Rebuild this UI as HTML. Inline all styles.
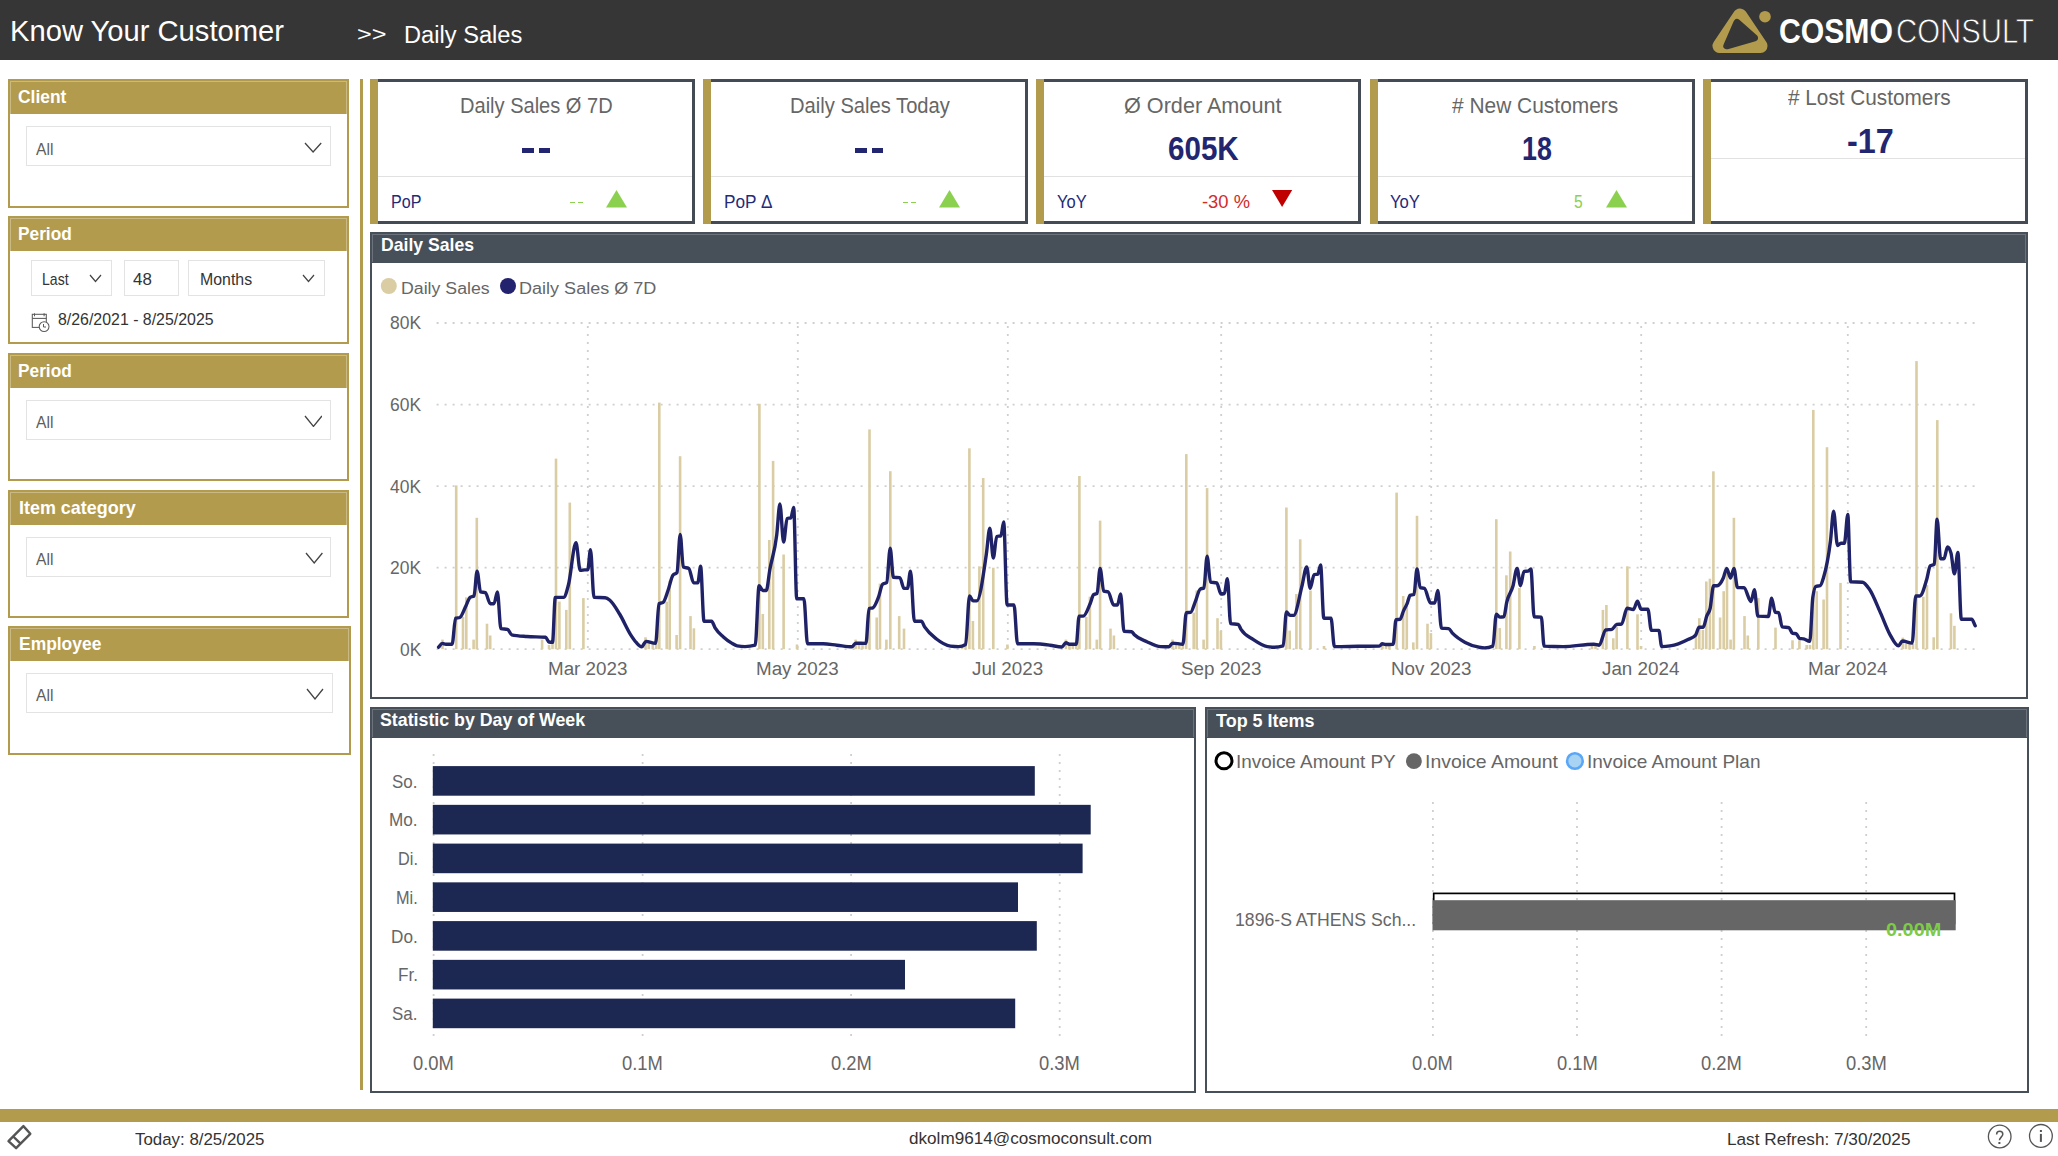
<!DOCTYPE html>
<html><head><meta charset="utf-8"><style>
html,body{margin:0;padding:0;width:2058px;height:1156px;overflow:hidden;background:#fff}
.t{position:absolute;white-space:nowrap;line-height:1;font-family:"Liberation Sans",sans-serif;transform-origin:0 0}
</style></head><body>
<div style="position:absolute;left:0px;top:0px;width:2058px;height:60px;background:#363636"></div>
<div class="t" style="left:10.00px;top:16.33px;font-size:30.09px;color:#fff;transform:scaleX(0.9695);">Know Your Customer</div>
<div class="t" style="left:356.50px;top:24.03px;font-size:20.75px;color:#fff;transform:scaleX(1.2169);">&gt;&gt;</div>
<div class="t" style="left:403.70px;top:22.78px;font-size:24.83px;color:#fff;transform:scaleX(0.9526);">Daily Sales</div>
<svg style="position:absolute;left:1700px;top:0" width="358" height="60" viewBox="1700 0 358 60">
<polygon points="1740,15.5 1719.5,46 1760.5,46" fill="#B39B4D" stroke="#B39B4D" stroke-width="14" stroke-linejoin="round"/>
<polygon points="1737,22.5 1726.8,45.8 1754.5,37.8" fill="#363636" stroke="#363636" stroke-width="7" stroke-linejoin="round"/>
<circle cx="1765" cy="16.7" r="5.8" fill="#B39B4D"/>
</svg>
<div class="t" style="left:1779.00px;top:13.89px;font-size:34.38px;color:#fff;font-weight:bold;transform:scaleX(0.8776);">COSMO</div>
<div class="t" style="left:1896.00px;top:13.89px;font-size:34.38px;color:#fff;transform:scaleX(0.8532);-webkit-text-stroke:0.8px #363636">CONSULT</div>
<div style="position:absolute;left:8px;top:79px;width:341px;height:129px;border:2px solid #B39B4D;box-sizing:border-box;background:#fff"></div>
<div style="position:absolute;left:8px;top:79px;width:341px;height:35px;background:#B39B4D"></div>
<div style="position:absolute;left:10px;top:81px;width:337px;height:1px;background:#C9B985"></div>
<div style="position:absolute;left:10px;top:81px;width:1px;height:33px;background:#C9B985"></div>
<div style="position:absolute;left:346px;top:81px;width:1px;height:33px;background:#C9B985"></div>
<div class="t" style="left:18.20px;top:89.07px;font-size:17.52px;color:#fff;font-weight:bold;transform:scaleX(0.9946);">Client</div>
<div style="position:absolute;left:26px;top:126px;width:305px;height:40px;border:1px solid #E3E3E3;box-sizing:border-box;background:#fff"></div>
<div class="t" style="left:36.00px;top:141.56px;font-size:16.83px;color:#605E5C;transform:scaleX(0.9307);">All</div>
<svg style="position:absolute;left:304.4px;top:142.3px" width="18.200000000000045" height="11.0"><polyline points="1,1 9.100000000000023,10.0 17.200000000000045,1" fill="none" stroke="#444" stroke-width="1.3"/></svg>
<div style="position:absolute;left:8px;top:216px;width:341px;height:128px;border:2px solid #B39B4D;box-sizing:border-box;background:#fff"></div>
<div style="position:absolute;left:8px;top:216px;width:341px;height:35px;background:#B39B4D"></div>
<div style="position:absolute;left:10px;top:218px;width:337px;height:1px;background:#C9B985"></div>
<div style="position:absolute;left:10px;top:218px;width:1px;height:33px;background:#C9B985"></div>
<div style="position:absolute;left:346px;top:218px;width:1px;height:33px;background:#C9B985"></div>
<div class="t" style="left:18.20px;top:226.07px;font-size:17.52px;color:#fff;font-weight:bold;transform:scaleX(0.9869);">Period</div>
<div style="position:absolute;left:31px;top:260px;width:81px;height:36px;border:1px solid #E3E3E3;box-sizing:border-box"></div>
<div class="t" style="left:42.40px;top:270.70px;font-size:17.01px;color:#333;transform:scaleX(0.8276);">Last</div>
<svg style="position:absolute;left:89px;top:274px" width="14" height="10"><polyline points="1,1 6.5,7.5 12,1" fill="none" stroke="#444" stroke-width="1.2"/></svg>
<div style="position:absolute;left:124px;top:260px;width:55px;height:36px;border:1px solid #E3E3E3;box-sizing:border-box"></div>
<div class="t" style="left:133.00px;top:271.73px;font-size:16.62px;color:#333;transform:scaleX(1.0173);">48</div>
<div style="position:absolute;left:188px;top:260px;width:137px;height:36px;border:1px solid #E3E3E3;box-sizing:border-box"></div>
<div class="t" style="left:199.70px;top:271.44px;font-size:16.14px;color:#333;transform:scaleX(0.9846);">Months</div>
<svg style="position:absolute;left:302px;top:274px" width="14" height="10"><polyline points="1,1 6.5,7.5 12,1" fill="none" stroke="#444" stroke-width="1.2"/></svg>
<svg style="position:absolute;left:30px;top:311px" width="22" height="23" viewBox="0 0 22 23">
<rect x="2.3" y="3.3" width="14" height="13.1" fill="none" stroke="#5A5A5A" stroke-width="1.05"/>
<line x1="2.3" y1="7.4" x2="16.3" y2="7.4" stroke="#5A5A5A" stroke-width="1.05"/>
<line x1="4.5" y1="2.3" x2="4.5" y2="5.3" stroke="#5A5A5A" stroke-width="1.05"/>
<line x1="14.1" y1="2.3" x2="14.1" y2="5.3" stroke="#5A5A5A" stroke-width="1.05"/>
<circle cx="14.1" cy="15.6" r="4.9" fill="#fff" stroke="#5A5A5A" stroke-width="1.05"/>
<polyline points="13.5,13 13.5,16 16,16" fill="none" stroke="#5A5A5A" stroke-width="1"/>
</svg>
<div class="t" style="left:58.00px;top:312.17px;font-size:15.86px;color:#333;transform:scaleX(1.0024);">8/26/2021 - 8/25/2025</div>
<div style="position:absolute;left:8px;top:353px;width:341px;height:128px;border:2px solid #B39B4D;box-sizing:border-box;background:#fff"></div>
<div style="position:absolute;left:8px;top:353px;width:341px;height:35px;background:#B39B4D"></div>
<div style="position:absolute;left:10px;top:355px;width:337px;height:1px;background:#C9B985"></div>
<div style="position:absolute;left:10px;top:355px;width:1px;height:33px;background:#C9B985"></div>
<div style="position:absolute;left:346px;top:355px;width:1px;height:33px;background:#C9B985"></div>
<div class="t" style="left:18.20px;top:363.07px;font-size:17.52px;color:#fff;font-weight:bold;transform:scaleX(0.9869);">Period</div>
<div style="position:absolute;left:26px;top:400px;width:305px;height:40px;border:1px solid #E3E3E3;box-sizing:border-box;background:#fff"></div>
<div class="t" style="left:35.80px;top:415.47px;font-size:16.69px;color:#605E5C;transform:scaleX(0.9384);">All</div>
<svg style="position:absolute;left:303.6px;top:415px" width="18.899999999999977" height="12.399999999999977"><polyline points="1,1 9.449999999999989,11.399999999999977 17.899999999999977,1" fill="none" stroke="#444" stroke-width="1.3"/></svg>
<div style="position:absolute;left:8px;top:490px;width:341px;height:128px;border:2px solid #B39B4D;box-sizing:border-box;background:#fff"></div>
<div style="position:absolute;left:8px;top:490px;width:341px;height:35px;background:#B39B4D"></div>
<div style="position:absolute;left:10px;top:492px;width:337px;height:1px;background:#C9B985"></div>
<div style="position:absolute;left:10px;top:492px;width:1px;height:33px;background:#C9B985"></div>
<div style="position:absolute;left:346px;top:492px;width:1px;height:33px;background:#C9B985"></div>
<div class="t" style="left:18.90px;top:498.38px;font-size:19.04px;color:#fff;font-weight:bold;transform:scaleX(0.9426);">Item category</div>
<div style="position:absolute;left:26px;top:537px;width:305px;height:40px;border:1px solid #E3E3E3;box-sizing:border-box;background:#fff"></div>
<div class="t" style="left:35.80px;top:552.47px;font-size:16.69px;color:#605E5C;transform:scaleX(0.9384);">All</div>
<svg style="position:absolute;left:304.6px;top:552px" width="18.399999999999977" height="12"><polyline points="1,1 9.199999999999989,11 17.399999999999977,1" fill="none" stroke="#444" stroke-width="1.3"/></svg>
<div style="position:absolute;left:8px;top:626px;width:343px;height:129px;border:2px solid #B39B4D;box-sizing:border-box;background:#fff"></div>
<div style="position:absolute;left:8px;top:626px;width:343px;height:35px;background:#B39B4D"></div>
<div style="position:absolute;left:10px;top:628px;width:339px;height:1px;background:#C9B985"></div>
<div style="position:absolute;left:10px;top:628px;width:1px;height:33px;background:#C9B985"></div>
<div style="position:absolute;left:348px;top:628px;width:1px;height:33px;background:#C9B985"></div>
<div class="t" style="left:18.90px;top:634.38px;font-size:19.04px;color:#fff;font-weight:bold;transform:scaleX(0.9161);">Employee</div>
<div style="position:absolute;left:26px;top:673px;width:307px;height:40px;border:1px solid #E3E3E3;box-sizing:border-box;background:#fff"></div>
<div class="t" style="left:35.80px;top:688.47px;font-size:16.69px;color:#605E5C;transform:scaleX(0.9384);">All</div>
<svg style="position:absolute;left:306px;top:688px" width="18" height="12"><polyline points="1,1 9.0,11 17,1" fill="none" stroke="#444" stroke-width="1.3"/></svg>
<div style="position:absolute;left:360px;top:79px;width:3px;height:1011px;background:#B39B4D"></div>
<div style="position:absolute;left:370px;top:79px;width:325px;height:145px;border:3px solid #444B55;border-left:none;box-sizing:border-box;background:#fff"></div>
<div style="position:absolute;left:370px;top:79px;width:8px;height:145px;background:#B39B4D"></div>
<div style="position:absolute;left:378px;top:176px;width:314px;height:1px;background:#E1E1E1"></div>
<div class="t" style="left:459.70px;top:95.82px;font-size:21.24px;color:#666;transform:scaleX(0.9442);">Daily Sales Ø 7D</div>
<div style="position:absolute;left:522.4px;top:148px;width:12px;height:5px;background:#22256F"></div>
<div style="position:absolute;left:538.9px;top:148px;width:11px;height:5px;background:#22256F"></div>
<div class="t" style="left:390.50px;top:192.87px;font-size:18.46px;color:#252A78;transform:scaleX(0.8714);">PoP</div>
<div style="position:absolute;left:569.8px;top:202px;width:5px;height:1.3px;background:#8CD050"></div>
<div style="position:absolute;left:577.8px;top:202px;width:5px;height:1.3px;background:#8CD050"></div>
<svg style="position:absolute;left:605.8px;top:190.3px" width="21" height="17.4"><polygon points="10.5,0 21,17.4 0,17.4" fill="#8CD050"/></svg>
<div style="position:absolute;left:703px;top:79px;width:325px;height:145px;border:3px solid #444B55;border-left:none;box-sizing:border-box;background:#fff"></div>
<div style="position:absolute;left:703px;top:79px;width:8px;height:145px;background:#B39B4D"></div>
<div style="position:absolute;left:711px;top:176px;width:314px;height:1px;background:#E1E1E1"></div>
<div class="t" style="left:789.50px;top:95.82px;font-size:21.24px;color:#666;transform:scaleX(0.9493);">Daily Sales Today</div>
<div style="position:absolute;left:855.4px;top:148px;width:12px;height:5px;background:#22256F"></div>
<div style="position:absolute;left:871.9px;top:148px;width:11px;height:5px;background:#22256F"></div>
<div class="t" style="left:723.50px;top:192.87px;font-size:18.46px;color:#252A78;transform:scaleX(0.9324);">PoP Δ</div>
<div style="position:absolute;left:902.8px;top:202px;width:5px;height:1.3px;background:#8CD050"></div>
<div style="position:absolute;left:910.8px;top:202px;width:5px;height:1.3px;background:#8CD050"></div>
<svg style="position:absolute;left:938.8px;top:190.3px" width="21" height="17.4"><polygon points="10.5,0 21,17.4 0,17.4" fill="#8CD050"/></svg>
<div style="position:absolute;left:1036px;top:79px;width:325px;height:145px;border:3px solid #444B55;border-left:none;box-sizing:border-box;background:#fff"></div>
<div style="position:absolute;left:1036px;top:79px;width:8px;height:145px;background:#B39B4D"></div>
<div style="position:absolute;left:1044px;top:176px;width:314px;height:1px;background:#E1E1E1"></div>
<div class="t" style="left:1123.60px;top:95.82px;font-size:21.24px;color:#666;transform:scaleX(1.0184);">Ø Order Amount</div>
<div class="t" style="left:1167.90px;top:132.53px;font-size:32.81px;color:#22256F;font-weight:bold;transform:scaleX(0.9013);">605K</div>
<div class="t" style="left:1056.50px;top:192.87px;font-size:18.46px;color:#252A78;transform:scaleX(0.8949);">YoY</div>
<div class="t" style="left:1202.00px;top:193.10px;font-size:18.19px;color:#D22B2B;transform:scaleX(1.0100);">-30 %</div>
<svg style="position:absolute;left:1272.4px;top:190.3px" width="20.2" height="17"><polygon points="0,0 20.2,0 10.1,17" fill="#C00000"/></svg>
<div style="position:absolute;left:1370px;top:79px;width:325px;height:145px;border:3px solid #444B55;border-left:none;box-sizing:border-box;background:#fff"></div>
<div style="position:absolute;left:1370px;top:79px;width:8px;height:145px;background:#B39B4D"></div>
<div style="position:absolute;left:1378px;top:176px;width:314px;height:1px;background:#E1E1E1"></div>
<div class="t" style="left:1452.40px;top:95.12px;font-size:22.06px;color:#666;transform:scaleX(0.9490);"># New Customers</div>
<div class="t" style="left:1521.90px;top:132.53px;font-size:32.81px;color:#22256F;font-weight:bold;transform:scaleX(0.8168);">18</div>
<div class="t" style="left:1389.50px;top:192.87px;font-size:18.46px;color:#252A78;transform:scaleX(0.9039);">YoY</div>
<div class="t" style="left:1574.30px;top:192.87px;font-size:18.46px;color:#8CD050;transform:scaleX(0.8477);">5</div>
<svg style="position:absolute;left:1605.8px;top:190.3px" width="21" height="17.4"><polygon points="10.5,0 21,17.4 0,17.4" fill="#8CD050"/></svg>
<div style="position:absolute;left:1703px;top:79px;width:325px;height:145px;border:3px solid #444B55;border-left:none;box-sizing:border-box;background:#fff"></div>
<div style="position:absolute;left:1703px;top:79px;width:8px;height:145px;background:#B39B4D"></div>
<div style="position:absolute;left:1711px;top:158px;width:314px;height:1px;background:#E1E1E1"></div>
<div class="t" style="left:1787.50px;top:87.63px;font-size:21.35px;color:#666;transform:scaleX(0.9727);"># Lost Customers</div>
<div class="t" style="left:1846.50px;top:123.32px;font-size:35.17px;color:#22256F;font-weight:bold;transform:scaleX(0.9208);">-17</div>
<div style="position:absolute;left:370px;top:232px;width:1658px;height:467px;border:2px solid #474F59;box-sizing:border-box;background:#fff"></div>
<div style="position:absolute;left:370px;top:232px;width:1658px;height:31px;background:#474F59"></div>
<div style="position:absolute;left:372px;top:234px;width:1654px;height:1px;background:#6B727B"></div>
<div style="position:absolute;left:372px;top:234px;width:1px;height:28px;background:#6B727B"></div>
<div style="position:absolute;left:2025px;top:234px;width:1px;height:28px;background:#6B727B"></div>
<div class="t" style="left:380.60px;top:236.62px;font-size:17.93px;color:#fff;font-weight:bold;transform:scaleX(0.9832);">Daily Sales</div>
<div style="position:absolute;left:370px;top:707px;width:826px;height:386px;border:2px solid #474F59;box-sizing:border-box;background:#fff"></div>
<div style="position:absolute;left:370px;top:707px;width:826px;height:31px;background:#474F59"></div>
<div style="position:absolute;left:372px;top:709px;width:822px;height:1px;background:#6B727B"></div>
<div style="position:absolute;left:372px;top:709px;width:1px;height:28px;background:#6B727B"></div>
<div style="position:absolute;left:1193px;top:709px;width:1px;height:28px;background:#6B727B"></div>
<div class="t" style="left:380.20px;top:710.99px;font-size:18.91px;color:#fff;font-weight:bold;transform:scaleX(0.9400);">Statistic by Day of Week</div>
<div style="position:absolute;left:1205px;top:707px;width:824px;height:386px;border:2px solid #474F59;box-sizing:border-box;background:#fff"></div>
<div style="position:absolute;left:1205px;top:707px;width:824px;height:31px;background:#474F59"></div>
<div style="position:absolute;left:1207px;top:709px;width:820px;height:1px;background:#6B727B"></div>
<div style="position:absolute;left:1207px;top:709px;width:1px;height:28px;background:#6B727B"></div>
<div style="position:absolute;left:2026px;top:709px;width:1px;height:28px;background:#6B727B"></div>
<div class="t" style="left:1215.70px;top:710.58px;font-size:19.04px;color:#fff;font-weight:bold;transform:scaleX(0.9446);">Top 5 Items</div>
<svg style="position:absolute;left:0;top:0" width="2058" height="1156" viewBox="0 0 2058 1156">
<line x1="433.6" y1="754" x2="433.6" y2="1038" stroke="#CFCFCF" stroke-width="1.8" stroke-dasharray="2 6"/>
<line x1="642.6" y1="754" x2="642.6" y2="1038" stroke="#CFCFCF" stroke-width="1.8" stroke-dasharray="2 6"/>
<line x1="851.1" y1="754" x2="851.1" y2="1038" stroke="#CFCFCF" stroke-width="1.8" stroke-dasharray="2 6"/>
<line x1="1059.7" y1="754" x2="1059.7" y2="1038" stroke="#CFCFCF" stroke-width="1.8" stroke-dasharray="2 6"/>
<rect x="432.8" y="766.10" width="602.00" height="29.6" fill="#1C2752"/>
<rect x="432.8" y="804.85" width="657.90" height="29.6" fill="#1C2752"/>
<rect x="432.8" y="843.60" width="649.80" height="29.6" fill="#1C2752"/>
<rect x="432.8" y="882.35" width="585.20" height="29.6" fill="#1C2752"/>
<rect x="432.8" y="921.10" width="604.00" height="29.6" fill="#1C2752"/>
<rect x="432.8" y="959.85" width="472.20" height="29.6" fill="#1C2752"/>
<rect x="432.8" y="998.60" width="582.40" height="29.6" fill="#1C2752"/>
<line x1="1432.9" y1="802" x2="1432.9" y2="1036" stroke="#CFCFCF" stroke-width="1.8" stroke-dasharray="2 6"/>
<line x1="1577" y1="802" x2="1577" y2="1036" stroke="#CFCFCF" stroke-width="1.8" stroke-dasharray="2 6"/>
<line x1="1721.6" y1="802" x2="1721.6" y2="1036" stroke="#CFCFCF" stroke-width="1.8" stroke-dasharray="2 6"/>
<line x1="1866.2" y1="802" x2="1866.2" y2="1036" stroke="#CFCFCF" stroke-width="1.8" stroke-dasharray="2 6"/>
<rect x="1433.7" y="893.4" width="520.8" height="30" fill="none" stroke="#000" stroke-width="1.7"/>
<rect x="1432.5" y="900.2" width="523.2" height="30.1" fill="#666666"/>
<circle cx="1224" cy="760.8" r="8" fill="#fff" stroke="#000" stroke-width="3"/>
<circle cx="1413.9" cy="761.1" r="7.9" fill="#666666"/>
<circle cx="1574.9" cy="761" r="7.8" fill="#A9D3F2" stroke="#5BA7F7" stroke-width="2.6"/>
<path d="M23.4,1126.1 L30.3,1133.8 L16.1,1148.2 L8.5,1141.2 Z" fill="none" stroke="#555" stroke-width="2.4" stroke-linejoin="round"/>
<line x1="13.2" y1="1136.5" x2="20.6" y2="1143.7" stroke="#555" stroke-width="2.4"/>
<circle cx="1999.7" cy="1136.5" r="11.3" fill="none" stroke="#555" stroke-width="1.3"/>
<circle cx="2040.9" cy="1135.9" r="11.4" fill="none" stroke="#555" stroke-width="1.3"/>
<path d="M1996.6,1134.4 C1996.6,1132 1998,1131.3 1999.7,1131.3 C2001.6,1131.3 2002.8,1132.5 2002.8,1134.2 C2002.8,1136.5 1999.6,1137.7 1999.4,1140.2" fill="none" stroke="#555" stroke-width="1.5"/>
<rect x="1998.4" y="1142" width="2" height="2" fill="#555"/>
<rect x="2039.9" y="1130" width="2" height="2" fill="#555"/>
<rect x="2039.9" y="1133.9" width="2" height="8" fill="#555"/>
</svg>
<div class="t" style="left:392.20px;top:772.90px;font-size:18.19px;color:#666;transform:scaleX(0.9300);">So.</div>
<div class="t" style="left:388.98px;top:811.42px;font-size:18.46px;color:#666;transform:scaleX(0.9300);">Mo.</div>
<div class="t" style="left:397.69px;top:850.97px;font-size:17.52px;color:#666;transform:scaleX(0.9300);">Di.</div>
<div class="t" style="left:395.88px;top:889.72px;font-size:17.52px;color:#666;transform:scaleX(0.9300);">Mi.</div>
<div class="t" style="left:390.89px;top:927.67px;font-size:18.46px;color:#666;transform:scaleX(0.9300);">Do.</div>
<div class="t" style="left:397.57px;top:966.42px;font-size:18.46px;color:#666;transform:scaleX(0.9300);">Fr.</div>
<div class="t" style="left:392.20px;top:1005.40px;font-size:18.19px;color:#666;transform:scaleX(0.9300);">Sa.</div>
<div class="t" style="left:413.18px;top:1053.83px;font-size:19.34px;color:#666;transform:scaleX(0.9500);">0.0M</div>
<div class="t" style="left:622.18px;top:1053.83px;font-size:19.34px;color:#666;transform:scaleX(0.9500);">0.1M</div>
<div class="t" style="left:830.68px;top:1053.83px;font-size:19.34px;color:#666;transform:scaleX(0.9500);">0.2M</div>
<div class="t" style="left:1039.28px;top:1053.83px;font-size:19.34px;color:#666;transform:scaleX(0.9500);">0.3M</div>
<div class="t" style="left:1412.48px;top:1053.83px;font-size:19.34px;color:#666;transform:scaleX(0.9500);">0.0M</div>
<div class="t" style="left:1556.58px;top:1053.83px;font-size:19.34px;color:#666;transform:scaleX(0.9500);">0.1M</div>
<div class="t" style="left:1701.18px;top:1053.83px;font-size:19.34px;color:#666;transform:scaleX(0.9500);">0.2M</div>
<div class="t" style="left:1845.78px;top:1053.83px;font-size:19.34px;color:#666;transform:scaleX(0.9500);">0.3M</div>
<div class="t" style="left:1236.00px;top:753.64px;font-size:17.79px;color:#666;transform:scaleX(1.0623);">Invoice Amount PY</div>
<div class="t" style="left:1424.90px;top:753.64px;font-size:17.79px;color:#666;transform:scaleX(1.0933);">Invoice Amount</div>
<div class="t" style="left:1587.40px;top:753.64px;font-size:17.79px;color:#666;transform:scaleX(1.0702);">Invoice Amount Plan</div>
<div class="t" style="left:1235.20px;top:910.85px;font-size:18.60px;color:#666;transform:scaleX(0.9494);">1896-S ATHENS Sch...</div>
<div class="t" style="left:1885.90px;top:921.18px;font-size:18.34px;color:#7DCB48;font-weight:bold;transform:scaleX(1.0851);">0.00M</div>
<div style="position:absolute;left:0px;top:1109px;width:2058px;height:13px;background:#B39B4D"></div>
<div class="t" style="left:135.00px;top:1131.39px;font-size:17.38px;color:#333;transform:scaleX(0.9719);">Today: 8/25/2025</div>
<div class="t" style="left:909.00px;top:1130.76px;font-size:16.83px;color:#333;transform:scaleX(1.0174);">dkolm9614@cosmoconsult.com</div>
<div class="t" style="left:1727.00px;top:1131.39px;font-size:17.38px;color:#333;transform:scaleX(0.9903);">Last Refresh: 7/30/2025</div>
<svg style="position:absolute;left:0;top:0" width="2058" height="1156" viewBox="0 0 2058 1156">
<line x1="436.6" y1="649.20" x2="1977" y2="649.20" stroke="#CFCFCF" stroke-width="1.8" stroke-dasharray="2 6"/>
<line x1="436.6" y1="567.65" x2="1977" y2="567.65" stroke="#CFCFCF" stroke-width="1.8" stroke-dasharray="2 6"/>
<line x1="436.6" y1="486.10" x2="1977" y2="486.10" stroke="#CFCFCF" stroke-width="1.8" stroke-dasharray="2 6"/>
<line x1="436.6" y1="404.55" x2="1977" y2="404.55" stroke="#CFCFCF" stroke-width="1.8" stroke-dasharray="2 6"/>
<line x1="436.6" y1="323.00" x2="1977" y2="323.00" stroke="#CFCFCF" stroke-width="1.8" stroke-dasharray="2 6"/>
<line x1="587.8" y1="326" x2="587.8" y2="650" stroke="#CFCFCF" stroke-width="1.8" stroke-dasharray="2 6"/>
<line x1="797.8" y1="326" x2="797.8" y2="650" stroke="#CFCFCF" stroke-width="1.8" stroke-dasharray="2 6"/>
<line x1="1007.8" y1="326" x2="1007.8" y2="650" stroke="#CFCFCF" stroke-width="1.8" stroke-dasharray="2 6"/>
<line x1="1221.2" y1="326" x2="1221.2" y2="650" stroke="#CFCFCF" stroke-width="1.8" stroke-dasharray="2 6"/>
<line x1="1431.2" y1="326" x2="1431.2" y2="650" stroke="#CFCFCF" stroke-width="1.8" stroke-dasharray="2 6"/>
<line x1="1641.2" y1="326" x2="1641.2" y2="650" stroke="#CFCFCF" stroke-width="1.8" stroke-dasharray="2 6"/>
<line x1="1847.8" y1="326" x2="1847.8" y2="650" stroke="#CFCFCF" stroke-width="1.8" stroke-dasharray="2 6"/>
<rect x="441.20" y="639.60" width="2.6" height="9.60" fill="#DACCA3"/>
<rect x="454.90" y="485.40" width="2.6" height="163.80" fill="#DACCA3"/>
<rect x="461.70" y="616.80" width="2.6" height="32.40" fill="#DACCA3"/>
<rect x="465.00" y="597.40" width="2.6" height="51.80" fill="#DACCA3"/>
<rect x="472.30" y="639.60" width="2.6" height="9.60" fill="#DACCA3"/>
<rect x="475.50" y="517.80" width="2.6" height="131.40" fill="#DACCA3"/>
<rect x="485.70" y="623.70" width="2.6" height="25.50" fill="#DACCA3"/>
<rect x="488.90" y="635.50" width="2.6" height="13.70" fill="#DACCA3"/>
<rect x="540.80" y="639.60" width="2.6" height="9.60" fill="#DACCA3"/>
<rect x="547.70" y="645.00" width="2.6" height="4.20" fill="#DACCA3"/>
<rect x="551.20" y="642.00" width="2.6" height="7.20" fill="#DACCA3"/>
<rect x="554.70" y="458.60" width="2.6" height="190.60" fill="#DACCA3"/>
<rect x="558.10" y="601.60" width="2.6" height="47.60" fill="#DACCA3"/>
<rect x="565.00" y="609.90" width="2.6" height="39.30" fill="#DACCA3"/>
<rect x="568.50" y="502.60" width="2.6" height="146.60" fill="#DACCA3"/>
<rect x="582.10" y="598.10" width="2.6" height="51.10" fill="#DACCA3"/>
<rect x="644.20" y="637.30" width="2.6" height="11.90" fill="#DACCA3"/>
<rect x="647.40" y="643.00" width="2.6" height="6.20" fill="#DACCA3"/>
<rect x="651.50" y="643.50" width="2.6" height="5.70" fill="#DACCA3"/>
<rect x="655.00" y="643.50" width="2.6" height="5.70" fill="#DACCA3"/>
<rect x="658.00" y="402.60" width="2.6" height="246.60" fill="#DACCA3"/>
<rect x="665.40" y="601.60" width="2.6" height="47.60" fill="#DACCA3"/>
<rect x="668.40" y="580.80" width="2.6" height="68.40" fill="#DACCA3"/>
<rect x="675.30" y="635.00" width="2.6" height="14.20" fill="#DACCA3"/>
<rect x="678.80" y="456.20" width="2.6" height="193.00" fill="#DACCA3"/>
<rect x="689.20" y="616.10" width="2.6" height="33.10" fill="#DACCA3"/>
<rect x="692.60" y="628.30" width="2.6" height="20.90" fill="#DACCA3"/>
<rect x="758.10" y="403.80" width="2.6" height="245.40" fill="#DACCA3"/>
<rect x="761.50" y="614.00" width="2.6" height="35.20" fill="#DACCA3"/>
<rect x="768.00" y="540.00" width="2.6" height="109.20" fill="#DACCA3"/>
<rect x="771.80" y="460.90" width="2.6" height="188.30" fill="#DACCA3"/>
<rect x="782.30" y="554.50" width="2.6" height="94.70" fill="#DACCA3"/>
<rect x="795.70" y="644.50" width="2.6" height="4.70" fill="#DACCA3"/>
<rect x="854.30" y="639.60" width="2.6" height="9.60" fill="#DACCA3"/>
<rect x="857.70" y="644.00" width="2.6" height="5.20" fill="#DACCA3"/>
<rect x="861.20" y="644.00" width="2.6" height="5.20" fill="#DACCA3"/>
<rect x="864.70" y="644.00" width="2.6" height="5.20" fill="#DACCA3"/>
<rect x="868.20" y="429.40" width="2.6" height="219.80" fill="#DACCA3"/>
<rect x="875.40" y="617.50" width="2.6" height="31.70" fill="#DACCA3"/>
<rect x="878.70" y="583.60" width="2.6" height="65.60" fill="#DACCA3"/>
<rect x="885.10" y="639.60" width="2.6" height="9.60" fill="#DACCA3"/>
<rect x="889.00" y="471.20" width="2.6" height="178.00" fill="#DACCA3"/>
<rect x="897.90" y="616.10" width="2.6" height="33.10" fill="#DACCA3"/>
<rect x="902.70" y="628.60" width="2.6" height="20.60" fill="#DACCA3"/>
<rect x="960.70" y="645.00" width="2.6" height="4.20" fill="#DACCA3"/>
<rect x="964.20" y="645.00" width="2.6" height="4.20" fill="#DACCA3"/>
<rect x="968.10" y="448.30" width="2.6" height="200.90" fill="#DACCA3"/>
<rect x="971.60" y="621.00" width="2.6" height="28.20" fill="#DACCA3"/>
<rect x="978.10" y="566.30" width="2.6" height="82.90" fill="#DACCA3"/>
<rect x="981.90" y="478.00" width="2.6" height="171.20" fill="#DACCA3"/>
<rect x="992.00" y="567.70" width="2.6" height="81.50" fill="#DACCA3"/>
<rect x="1006.10" y="644.50" width="2.6" height="4.70" fill="#DACCA3"/>
<rect x="1064.60" y="639.60" width="2.6" height="9.60" fill="#DACCA3"/>
<rect x="1068.10" y="645.00" width="2.6" height="4.20" fill="#DACCA3"/>
<rect x="1071.50" y="645.00" width="2.6" height="4.20" fill="#DACCA3"/>
<rect x="1075.00" y="645.00" width="2.6" height="4.20" fill="#DACCA3"/>
<rect x="1078.10" y="476.00" width="2.6" height="173.20" fill="#DACCA3"/>
<rect x="1085.00" y="616.80" width="2.6" height="32.40" fill="#DACCA3"/>
<rect x="1088.60" y="596.70" width="2.6" height="52.50" fill="#DACCA3"/>
<rect x="1095.50" y="639.60" width="2.6" height="9.60" fill="#DACCA3"/>
<rect x="1098.80" y="520.60" width="2.6" height="128.60" fill="#DACCA3"/>
<rect x="1109.20" y="628.60" width="2.6" height="20.60" fill="#DACCA3"/>
<rect x="1112.60" y="635.50" width="2.6" height="13.70" fill="#DACCA3"/>
<rect x="1171.20" y="639.60" width="2.6" height="9.60" fill="#DACCA3"/>
<rect x="1174.70" y="645.00" width="2.6" height="4.20" fill="#DACCA3"/>
<rect x="1178.10" y="645.00" width="2.6" height="4.20" fill="#DACCA3"/>
<rect x="1181.60" y="645.00" width="2.6" height="4.20" fill="#DACCA3"/>
<rect x="1185.00" y="454.10" width="2.6" height="195.10" fill="#DACCA3"/>
<rect x="1192.40" y="612.60" width="2.6" height="36.60" fill="#DACCA3"/>
<rect x="1195.40" y="590.50" width="2.6" height="58.70" fill="#DACCA3"/>
<rect x="1202.30" y="639.60" width="2.6" height="9.60" fill="#DACCA3"/>
<rect x="1205.80" y="488.10" width="2.6" height="161.10" fill="#DACCA3"/>
<rect x="1216.20" y="618.20" width="2.6" height="31.00" fill="#DACCA3"/>
<rect x="1219.60" y="630.60" width="2.6" height="18.60" fill="#DACCA3"/>
<rect x="1285.10" y="507.50" width="2.6" height="141.70" fill="#DACCA3"/>
<rect x="1288.40" y="630.60" width="2.6" height="18.60" fill="#DACCA3"/>
<rect x="1295.10" y="594.00" width="2.6" height="55.20" fill="#DACCA3"/>
<rect x="1298.90" y="539.30" width="2.6" height="109.90" fill="#DACCA3"/>
<rect x="1309.20" y="590.50" width="2.6" height="58.70" fill="#DACCA3"/>
<rect x="1322.70" y="646.00" width="2.6" height="3.20" fill="#DACCA3"/>
<rect x="1381.10" y="642.40" width="2.6" height="6.80" fill="#DACCA3"/>
<rect x="1384.70" y="645.00" width="2.6" height="4.20" fill="#DACCA3"/>
<rect x="1388.10" y="645.00" width="2.6" height="4.20" fill="#DACCA3"/>
<rect x="1395.30" y="492.60" width="2.6" height="156.60" fill="#DACCA3"/>
<rect x="1401.90" y="596.00" width="2.6" height="53.20" fill="#DACCA3"/>
<rect x="1405.50" y="605.70" width="2.6" height="43.50" fill="#DACCA3"/>
<rect x="1412.00" y="642.40" width="2.6" height="6.80" fill="#DACCA3"/>
<rect x="1415.70" y="515.80" width="2.6" height="133.40" fill="#DACCA3"/>
<rect x="1426.20" y="623.70" width="2.6" height="25.50" fill="#DACCA3"/>
<rect x="1429.60" y="633.10" width="2.6" height="16.10" fill="#DACCA3"/>
<rect x="1495.00" y="519.20" width="2.6" height="130.00" fill="#DACCA3"/>
<rect x="1498.50" y="628.10" width="2.6" height="21.10" fill="#DACCA3"/>
<rect x="1505.10" y="575.30" width="2.6" height="73.90" fill="#DACCA3"/>
<rect x="1508.90" y="551.50" width="2.6" height="97.70" fill="#DACCA3"/>
<rect x="1518.10" y="588.00" width="2.6" height="61.20" fill="#DACCA3"/>
<rect x="1533.10" y="646.00" width="2.6" height="3.20" fill="#DACCA3"/>
<rect x="1590.70" y="646.00" width="2.6" height="3.20" fill="#DACCA3"/>
<rect x="1594.20" y="646.00" width="2.6" height="3.20" fill="#DACCA3"/>
<rect x="1601.60" y="609.90" width="2.6" height="39.30" fill="#DACCA3"/>
<rect x="1605.10" y="605.00" width="2.6" height="44.20" fill="#DACCA3"/>
<rect x="1612.00" y="638.30" width="2.6" height="10.90" fill="#DACCA3"/>
<rect x="1615.40" y="626.50" width="2.6" height="22.70" fill="#DACCA3"/>
<rect x="1626.10" y="566.30" width="2.6" height="82.90" fill="#DACCA3"/>
<rect x="1636.20" y="614.30" width="2.6" height="34.90" fill="#DACCA3"/>
<rect x="1639.70" y="646.00" width="2.6" height="3.20" fill="#DACCA3"/>
<rect x="1694.70" y="635.00" width="2.6" height="14.20" fill="#DACCA3"/>
<rect x="1698.00" y="618.20" width="2.6" height="31.00" fill="#DACCA3"/>
<rect x="1701.60" y="630.00" width="2.6" height="19.20" fill="#DACCA3"/>
<rect x="1705.00" y="581.50" width="2.6" height="67.70" fill="#DACCA3"/>
<rect x="1708.60" y="578.70" width="2.6" height="70.50" fill="#DACCA3"/>
<rect x="1712.10" y="471.30" width="2.6" height="177.90" fill="#DACCA3"/>
<rect x="1718.80" y="617.50" width="2.6" height="31.70" fill="#DACCA3"/>
<rect x="1722.40" y="591.20" width="2.6" height="58.00" fill="#DACCA3"/>
<rect x="1725.70" y="572.50" width="2.6" height="76.70" fill="#DACCA3"/>
<rect x="1729.30" y="639.60" width="2.6" height="9.60" fill="#DACCA3"/>
<rect x="1732.60" y="517.80" width="2.6" height="131.40" fill="#DACCA3"/>
<rect x="1743.20" y="616.10" width="2.6" height="33.10" fill="#DACCA3"/>
<rect x="1746.50" y="635.50" width="2.6" height="13.70" fill="#DACCA3"/>
<rect x="1757.00" y="598.10" width="2.6" height="51.10" fill="#DACCA3"/>
<rect x="1774.20" y="627.60" width="2.6" height="21.60" fill="#DACCA3"/>
<rect x="1791.20" y="640.30" width="2.6" height="8.90" fill="#DACCA3"/>
<rect x="1798.10" y="640.30" width="2.6" height="8.90" fill="#DACCA3"/>
<rect x="1805.40" y="645.00" width="2.6" height="4.20" fill="#DACCA3"/>
<rect x="1808.70" y="645.00" width="2.6" height="4.20" fill="#DACCA3"/>
<rect x="1812.00" y="409.90" width="2.6" height="239.30" fill="#DACCA3"/>
<rect x="1815.40" y="591.20" width="2.6" height="58.00" fill="#DACCA3"/>
<rect x="1822.30" y="599.50" width="2.6" height="49.70" fill="#DACCA3"/>
<rect x="1825.70" y="447.20" width="2.6" height="202.00" fill="#DACCA3"/>
<rect x="1839.20" y="582.90" width="2.6" height="66.30" fill="#DACCA3"/>
<rect x="1901.50" y="637.60" width="2.6" height="11.60" fill="#DACCA3"/>
<rect x="1904.70" y="644.00" width="2.6" height="5.20" fill="#DACCA3"/>
<rect x="1908.20" y="644.00" width="2.6" height="5.20" fill="#DACCA3"/>
<rect x="1911.70" y="644.00" width="2.6" height="5.20" fill="#DACCA3"/>
<rect x="1915.20" y="361.10" width="2.6" height="288.10" fill="#DACCA3"/>
<rect x="1922.00" y="596.70" width="2.6" height="52.50" fill="#DACCA3"/>
<rect x="1925.70" y="585.00" width="2.6" height="64.20" fill="#DACCA3"/>
<rect x="1932.40" y="637.30" width="2.6" height="11.90" fill="#DACCA3"/>
<rect x="1936.00" y="420.10" width="2.6" height="229.10" fill="#DACCA3"/>
<rect x="1949.70" y="613.30" width="2.6" height="35.90" fill="#DACCA3"/>
<rect x="1953.10" y="625.80" width="2.6" height="23.40" fill="#DACCA3"/>
<path d="M438.6,647.2 C439.80,645.93 441.00,643.40 442.2,643.4 C443.43,643.40 444.67,644.20 445.9,644.2 C447.97,644.20 450.03,644.20 452.1,644.2 C453.27,644.20 454.43,618.59 455.6,618.2 C457.00,617.73 458.40,617.97 459.8,617.5 C461.87,616.81 463.93,609.78 466.0,605.7 C467.37,603.00 468.73,598.38 470.1,597.4 C471.40,596.47 472.70,596.93 474.0,596.0 C475.03,595.26 476.07,571.10 477.1,571.1 C478.23,571.10 479.37,591.58 480.5,591.9 C482.13,592.37 483.77,592.13 485.4,592.6 C487.00,593.06 488.60,603.70 490.2,603.7 C491.47,603.70 492.73,603.70 494.0,603.7 C495.13,603.70 496.27,591.90 497.4,591.9 C498.57,591.90 499.73,628.35 500.9,628.6 C503.10,629.07 505.30,628.83 507.5,629.3 C508.90,629.60 510.30,634.49 511.7,634.8 C516.77,635.93 521.83,636.09 526.9,636.5 C533.13,637.00 539.37,636.77 545.6,637.3 C546.73,637.40 547.87,641.74 549.0,642.0 C550.17,642.27 551.33,642.40 552.5,642.4 C553.43,642.40 554.37,597.40 555.3,597.4 C558.07,597.40 560.83,597.40 563.6,597.4 C565.20,597.40 566.80,590.97 568.4,585.0 C570.93,575.54 573.47,542.80 576.0,542.8 C577.40,542.80 578.80,570.40 580.2,570.4 C581.63,570.40 583.07,570.02 584.5,569.9 C585.60,569.81 586.70,569.83 587.8,569.7 C588.70,569.59 589.60,549.70 590.5,549.7 C591.67,549.70 592.83,597.34 594.0,597.4 C597.70,597.60 601.40,597.50 605.1,597.7 C606.70,597.79 608.30,598.89 609.9,600.2 C613.13,602.85 616.37,608.72 619.6,614.0 C623.30,620.04 627.00,629.08 630.7,634.8 C632.53,637.63 634.37,640.40 636.2,642.4 C638.03,644.40 639.87,646.80 641.7,646.8 C643.10,646.80 644.50,641.40 645.9,641.4 C649.13,641.40 652.37,643.40 655.6,643.4 C656.73,643.40 657.87,604.46 659.0,603.7 C660.40,602.77 661.80,603.23 663.2,602.3 C664.80,601.23 666.40,594.94 668.0,590.5 C669.63,585.96 671.27,577.53 672.9,575.3 C674.27,573.43 675.63,574.37 677.0,572.5 C678.07,571.04 679.13,534.40 680.2,534.4 C681.23,534.40 682.27,566.47 683.3,567.0 C685.13,567.93 686.97,567.47 688.8,568.4 C690.43,569.23 692.07,582.90 693.7,582.9 C695.07,582.90 696.43,582.90 697.8,582.9 C698.73,582.90 699.67,566.30 700.6,566.3 C701.73,566.30 702.87,621.20 704.0,621.2 C706.53,621.20 709.07,621.20 711.6,621.2 C712.77,621.20 713.93,625.95 715.1,627.9 C717.87,632.52 720.63,634.37 723.4,636.9 C726.17,639.43 728.93,641.43 731.7,643.1 C733.53,644.21 735.37,645.57 737.2,645.9 C739.80,646.37 742.40,646.60 745.0,646.6 C748.40,646.60 751.80,646.13 755.2,645.2 C756.50,644.84 757.80,585.70 759.1,585.7 C760.33,585.70 761.57,590.50 762.8,590.5 C763.97,590.50 765.13,590.50 766.3,590.5 C767.47,590.50 768.63,576.27 769.8,569.7 C772.10,556.75 774.40,554.03 776.7,535.1 C777.77,526.32 778.83,504.00 779.9,504.0 C781.13,504.00 782.37,542.10 783.6,542.1 C784.77,542.10 785.93,518.93 787.1,518.5 C788.37,518.03 789.63,518.27 790.9,517.8 C791.83,517.46 792.77,507.50 793.7,507.5 C794.70,507.50 795.70,598.80 796.7,598.8 C799.10,598.80 801.50,598.80 803.9,598.8 C805.10,598.80 806.30,643.80 807.5,643.8 C812.67,643.80 817.83,643.80 823.0,643.8 C827.63,643.80 832.27,644.72 836.9,645.2 C841.97,645.72 847.03,646.80 852.1,646.8 C853.27,646.80 854.43,643.10 855.6,643.1 C859.07,643.10 862.53,643.40 866.0,643.4 C867.00,643.40 868.00,608.86 869.0,608.5 C870.30,608.03 871.60,608.27 872.9,607.8 C874.73,607.14 876.57,602.14 878.4,597.4 C879.80,593.78 881.20,585.53 882.6,584.3 C883.97,583.10 885.33,583.70 886.7,582.5 C887.87,581.48 889.03,548.30 890.2,548.3 C891.27,548.30 892.33,577.33 893.4,577.4 C895.53,577.53 897.67,577.47 899.8,577.6 C901.20,577.69 902.60,588.40 904.0,588.4 C905.17,588.40 906.33,588.40 907.5,588.4 C908.50,588.40 909.50,571.10 910.5,571.1 C911.80,571.10 913.10,621.20 914.4,621.2 C916.70,621.20 919.00,621.20 921.3,621.2 C922.47,621.20 923.63,625.39 924.8,627.2 C928.70,633.25 932.60,635.95 936.5,639.0 C941.13,642.62 945.77,645.54 950.4,646.1 C953.17,646.43 955.93,646.60 958.7,646.6 C961.00,646.60 963.30,645.90 965.6,644.5 C966.90,643.71 968.20,596.00 969.5,596.0 C970.73,596.00 971.97,600.90 973.2,600.9 C974.37,600.90 975.53,600.90 976.7,600.9 C979.90,600.90 983.10,576.25 986.3,554.5 C987.47,546.57 988.63,528.20 989.8,528.2 C990.97,528.20 992.13,558.00 993.3,558.0 C994.43,558.00 995.57,536.88 996.7,536.5 C998.10,536.03 999.50,536.27 1000.9,535.8 C1001.83,535.49 1002.77,522.00 1003.7,522.0 C1004.83,522.00 1005.97,605.00 1007.1,605.0 C1009.40,605.00 1011.70,605.00 1014.0,605.0 C1015.17,605.00 1016.33,643.80 1017.5,643.8 C1022.80,643.80 1028.10,643.80 1033.4,643.8 C1038.93,643.80 1044.47,644.51 1050.0,645.2 C1053.93,645.69 1057.87,647.00 1061.8,647.0 C1063.17,647.00 1064.53,642.80 1065.9,642.8 C1067.07,642.80 1068.23,644.20 1069.4,644.2 C1071.70,644.20 1074.00,644.20 1076.3,644.2 C1077.23,644.20 1078.17,616.10 1079.1,616.1 C1080.47,616.10 1081.83,616.10 1083.2,616.1 C1085.50,616.10 1087.80,609.01 1090.1,603.7 C1091.27,601.00 1092.43,595.63 1093.6,594.7 C1094.77,593.77 1095.93,594.23 1097.1,593.3 C1098.10,592.50 1099.10,568.40 1100.1,568.4 C1101.30,568.40 1102.50,590.82 1103.7,591.2 C1105.17,591.67 1106.63,591.43 1108.1,591.9 C1109.97,592.49 1111.83,605.00 1113.7,605.0 C1114.97,605.00 1116.23,605.00 1117.5,605.0 C1118.53,605.00 1119.57,594.00 1120.6,594.0 C1121.73,594.00 1122.87,631.18 1124.0,631.3 C1126.57,631.57 1129.13,631.43 1131.7,631.7 C1132.60,631.79 1133.50,633.86 1134.4,634.8 C1138.57,639.14 1142.73,639.79 1146.9,641.7 C1151.50,643.81 1156.10,646.38 1160.7,646.6 C1163.47,646.73 1166.23,646.80 1169.0,646.8 C1170.17,646.80 1171.33,643.10 1172.5,643.1 C1175.97,643.10 1179.43,644.20 1182.9,644.2 C1184.03,644.20 1185.17,612.71 1186.3,612.6 C1187.70,612.47 1189.10,612.53 1190.5,612.4 C1192.10,612.25 1193.70,605.44 1195.3,601.6 C1196.93,597.68 1198.57,590.07 1200.2,589.1 C1201.43,588.37 1202.67,588.73 1203.9,588.0 C1204.97,587.37 1206.03,556.10 1207.1,556.1 C1208.23,556.10 1209.37,581.95 1210.5,582.2 C1212.60,582.67 1214.70,582.43 1216.8,582.9 C1218.17,583.20 1219.53,594.00 1220.9,594.0 C1222.07,594.00 1223.23,593.83 1224.4,593.5 C1225.40,593.21 1226.40,578.70 1227.4,578.7 C1228.47,578.70 1229.53,623.50 1230.6,623.7 C1233.13,624.17 1235.67,623.93 1238.2,624.4 C1239.13,624.57 1240.07,627.82 1241.0,629.3 C1245.13,635.83 1249.27,636.80 1253.4,639.6 C1258.03,642.73 1262.67,645.79 1267.3,646.6 C1269.60,647.00 1271.90,647.20 1274.2,647.2 C1277.20,647.20 1280.20,646.77 1283.2,645.9 C1284.27,645.59 1285.33,612.00 1286.4,612.0 C1287.63,612.00 1288.87,615.40 1290.1,615.4 C1291.27,615.40 1292.43,615.40 1293.6,615.4 C1296.37,615.40 1299.13,596.90 1301.9,586.3 C1303.50,580.17 1305.10,567.00 1306.7,567.0 C1307.87,567.00 1309.03,588.40 1310.2,588.4 C1311.50,588.40 1312.80,574.88 1314.1,574.6 C1315.33,574.33 1316.57,574.47 1317.8,574.2 C1318.73,574.00 1319.67,564.90 1320.6,564.9 C1321.67,564.90 1322.73,618.20 1323.8,618.2 C1326.20,618.20 1328.60,618.20 1331.0,618.2 C1332.13,618.20 1333.27,646.60 1334.4,646.6 C1342.27,646.60 1350.13,646.39 1358.0,646.3 C1365.13,646.22 1372.27,646.23 1379.4,646.1 C1380.30,646.08 1381.20,643.80 1382.1,643.8 C1383.27,643.80 1384.43,644.50 1385.6,644.5 C1388.13,644.50 1390.67,644.40 1393.2,644.2 C1394.13,644.13 1395.07,619.74 1396.0,619.6 C1397.37,619.40 1398.73,619.50 1400.1,619.3 C1401.27,619.13 1402.43,613.20 1403.6,610.6 C1404.77,608.00 1405.93,606.52 1407.1,603.7 C1408.10,601.28 1409.10,595.76 1410.1,595.3 C1411.40,594.70 1412.70,595.00 1414.0,594.4 C1415.00,593.94 1416.00,569.00 1417.0,569.0 C1418.07,569.00 1419.13,587.34 1420.2,587.7 C1421.60,588.17 1423.00,587.93 1424.4,588.4 C1426.47,589.09 1428.53,603.00 1430.6,603.0 C1431.97,603.00 1433.33,603.00 1434.7,603.0 C1435.73,603.00 1436.77,590.50 1437.8,590.5 C1439.00,590.50 1440.20,627.93 1441.4,628.1 C1443.80,628.43 1446.20,628.27 1448.6,628.6 C1449.97,628.79 1451.33,631.95 1452.7,633.4 C1456.87,637.81 1461.03,640.14 1465.2,642.4 C1469.80,644.90 1474.40,646.33 1479.0,647.2 C1480.87,647.55 1482.73,647.90 1484.6,647.9 C1487.37,647.90 1490.13,647.30 1492.9,646.1 C1494.03,645.61 1495.17,614.30 1496.3,614.3 C1497.47,614.30 1498.63,617.10 1499.8,617.1 C1501.17,617.10 1502.53,617.00 1503.9,616.8 C1504.83,616.66 1505.77,606.38 1506.7,602.3 C1508.77,593.27 1510.83,593.70 1512.9,586.3 C1514.30,581.28 1515.70,568.40 1517.1,568.4 C1518.23,568.40 1519.37,585.70 1520.5,585.7 C1521.67,585.70 1522.83,571.57 1524.0,571.4 C1525.37,571.20 1526.73,571.30 1528.1,571.1 C1529.03,570.96 1529.97,569.00 1530.9,569.0 C1531.97,569.00 1533.03,616.71 1534.1,616.8 C1536.50,617.00 1538.90,616.90 1541.3,617.1 C1542.23,617.18 1543.17,646.05 1544.1,646.1 C1550.53,646.43 1556.97,646.60 1563.4,646.6 C1573.57,646.60 1583.73,644.20 1593.9,644.2 C1595.67,644.20 1597.43,645.20 1599.2,645.2 C1601.37,645.20 1603.53,630.49 1605.7,630.0 C1607.77,629.53 1609.83,629.77 1611.9,629.3 C1613.50,628.94 1615.10,624.66 1616.7,624.4 C1618.33,624.13 1619.97,624.27 1621.6,624.0 C1623.43,623.70 1625.27,608.20 1627.1,608.2 C1629.17,608.20 1631.23,609.60 1633.3,609.6 C1634.70,609.60 1636.10,601.30 1637.5,601.3 C1638.67,601.30 1639.83,609.20 1641.0,609.2 C1643.30,609.20 1645.60,609.20 1647.9,609.2 C1649.03,609.20 1650.17,630.40 1651.3,630.4 C1653.83,630.40 1656.37,630.40 1658.9,630.4 C1659.83,630.40 1660.77,646.60 1661.7,646.6 C1664.47,646.60 1667.23,646.37 1670.0,645.9 C1672.77,645.43 1675.53,644.73 1678.3,643.8 C1681.53,642.71 1684.77,641.29 1688.0,639.6 C1690.53,638.28 1693.07,638.10 1695.6,635.1 C1696.77,633.72 1697.93,627.20 1699.1,627.2 C1700.47,627.20 1701.83,627.20 1703.2,627.2 C1704.37,627.20 1705.53,619.25 1706.7,616.1 C1707.83,613.04 1708.97,613.42 1710.1,608.5 C1711.27,603.43 1712.43,585.70 1713.6,585.7 C1714.77,585.70 1715.93,585.70 1717.1,585.7 C1719.17,585.70 1721.23,582.68 1723.3,578.0 C1724.43,575.43 1725.57,568.40 1726.7,568.4 C1728.00,568.40 1729.30,578.00 1730.6,578.0 C1731.70,578.00 1732.80,568.40 1733.9,568.4 C1735.10,568.40 1736.30,587.43 1737.5,587.5 C1739.67,587.63 1741.83,587.57 1744.0,587.7 C1746.33,587.84 1748.67,601.60 1751.0,601.6 C1752.13,601.60 1753.27,589.80 1754.4,589.8 C1755.57,589.80 1756.73,616.01 1757.9,616.1 C1761.37,616.37 1764.83,616.50 1768.3,616.5 C1769.43,616.50 1770.57,598.10 1771.7,598.1 C1772.87,598.10 1774.03,612.27 1775.2,612.4 C1776.37,612.53 1777.53,612.47 1778.7,612.6 C1779.83,612.73 1780.97,626.54 1782.1,626.8 C1784.40,627.33 1786.70,627.07 1789.0,627.6 C1790.17,627.87 1791.33,633.21 1792.5,633.4 C1793.73,633.60 1794.97,633.50 1796.2,633.7 C1797.27,633.87 1798.33,638.00 1799.4,638.3 C1800.80,638.70 1802.20,638.55 1803.6,638.9 C1805.67,639.41 1807.73,641.40 1809.8,641.4 C1810.80,641.40 1811.80,604.34 1812.8,597.4 C1813.87,590.00 1814.93,586.60 1816.0,586.3 C1817.40,585.90 1818.80,586.10 1820.2,585.7 C1821.27,585.40 1822.33,581.51 1823.4,578.0 C1825.77,570.21 1828.13,560.10 1830.5,540.7 C1831.53,532.23 1832.57,511.30 1833.6,511.3 C1834.90,511.30 1836.20,545.50 1837.5,545.5 C1838.63,545.50 1839.77,543.20 1840.9,543.2 C1842.07,543.20 1843.23,543.20 1844.4,543.2 C1845.53,543.20 1846.67,514.40 1847.8,514.4 C1848.73,514.40 1849.67,581.85 1850.6,581.9 C1854.53,582.10 1858.47,582.00 1862.4,582.2 C1864.70,582.32 1867.00,585.82 1869.3,589.1 C1873.00,594.38 1876.70,604.43 1880.4,612.6 C1883.63,619.74 1886.87,629.06 1890.1,634.8 C1892.87,639.71 1895.63,645.90 1898.4,645.9 C1899.77,645.90 1901.13,641.00 1902.5,641.0 C1905.73,641.00 1908.97,643.10 1912.2,643.1 C1913.37,643.10 1914.53,596.00 1915.7,596.0 C1917.07,596.00 1918.43,596.00 1919.8,596.0 C1922.10,596.00 1924.40,587.15 1926.7,579.4 C1927.87,575.47 1929.03,566.87 1930.2,565.9 C1931.57,564.77 1932.93,565.33 1934.3,564.2 C1935.23,563.43 1936.17,519.20 1937.1,519.2 C1938.27,519.20 1939.43,558.70 1940.6,558.7 C1941.73,558.70 1942.87,558.70 1944.0,558.7 C1945.17,558.70 1946.33,546.90 1947.5,546.9 C1948.67,546.90 1949.83,548.97 1951.0,553.1 C1952.13,557.12 1953.27,573.90 1954.4,573.9 C1955.57,573.90 1956.73,552.40 1957.9,552.4 C1959.03,552.40 1960.17,619.30 1961.3,619.3 C1964.77,619.30 1968.23,619.30 1971.7,619.3 C1972.87,619.30 1974.03,623.63 1975.2,625.8" fill="none" stroke="#1F2267" stroke-width="3.4" stroke-linejoin="round" stroke-linecap="round"/>
<circle cx="388.8" cy="286" r="8" fill="#DACCA3"/>
<circle cx="508" cy="286" r="8" fill="#22226E"/>
</svg>
<div class="t" style="left:401.10px;top:279.51px;font-size:16.41px;color:#666666;transform:scaleX(1.0804);">Daily Sales</div>
<div class="t" style="left:519.40px;top:279.51px;font-size:16.41px;color:#666666;transform:scaleX(1.0994);">Daily Sales Ø 7D</div>
<div class="t" style="left:399.94px;top:641.06px;font-size:18.48px;color:#666666;transform:scaleX(0.9450);">0K</div>
<div class="t" style="left:390.23px;top:559.28px;font-size:18.48px;color:#666666;transform:scaleX(0.9450);">20K</div>
<div class="t" style="left:390.23px;top:477.51px;font-size:18.48px;color:#666666;transform:scaleX(0.9450);">40K</div>
<div class="t" style="left:390.23px;top:395.73px;font-size:18.48px;color:#666666;transform:scaleX(0.9450);">60K</div>
<div class="t" style="left:390.23px;top:313.96px;font-size:18.48px;color:#666666;transform:scaleX(0.9450);">80K</div>
<div class="t" style="left:548.02px;top:660.17px;font-size:18.46px;color:#666666;transform:scaleX(1.0200);">Mar 2023</div>
<div class="t" style="left:756.45px;top:660.17px;font-size:18.46px;color:#666666;transform:scaleX(1.0200);">May 2023</div>
<div class="t" style="left:972.20px;top:660.17px;font-size:18.46px;color:#666666;transform:scaleX(1.0200);">Jul 2023</div>
<div class="t" style="left:1180.89px;top:660.17px;font-size:18.46px;color:#666666;transform:scaleX(1.0200);">Sep 2023</div>
<div class="t" style="left:1390.90px;top:660.17px;font-size:18.46px;color:#666666;transform:scaleX(1.0200);">Nov 2023</div>
<div class="t" style="left:1602.46px;top:660.17px;font-size:18.46px;color:#666666;transform:scaleX(1.0200);">Jan 2024</div>
<div class="t" style="left:1808.02px;top:660.17px;font-size:18.46px;color:#666666;transform:scaleX(1.0200);">Mar 2024</div>

</body></html>
